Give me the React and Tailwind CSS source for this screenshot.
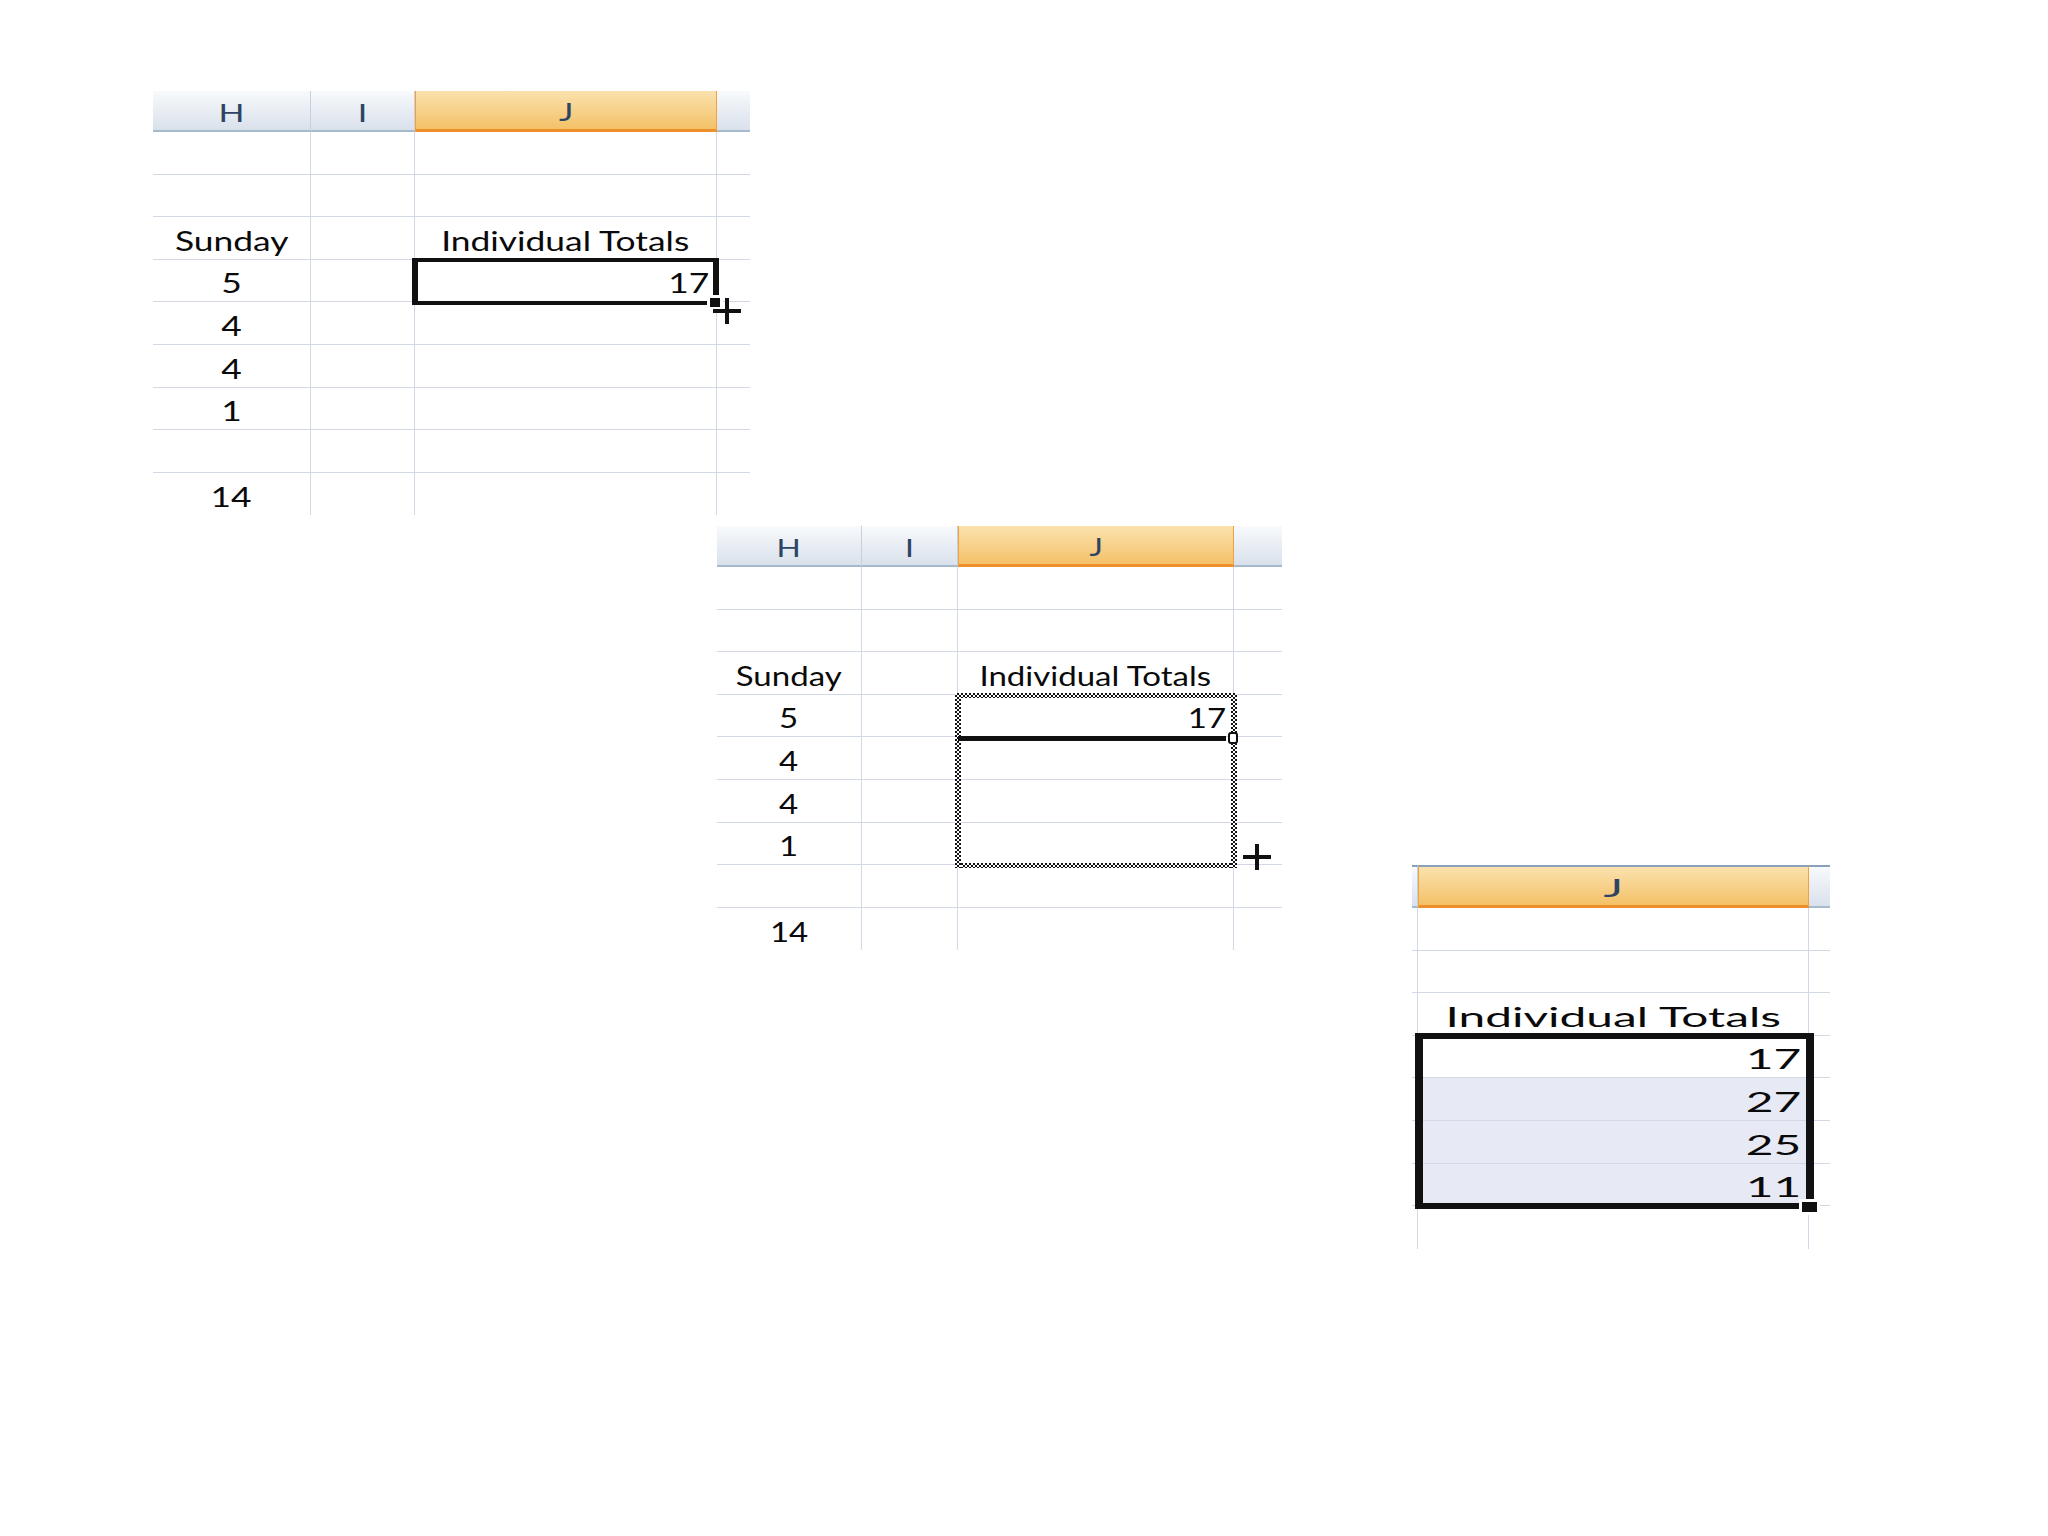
import React from "react";
import clsx from "clsx";

const GRID = "border-[#d3d8e7]";

function Plus({ className }) {
  return (
    <svg className={clsx("absolute", className)} width="28" height="26" viewBox="0 0 28 26">
      <rect x="0" y="11" width="28" height="4" fill="#111" />
      <rect x="12" y="0" width="4" height="26" fill="#111" />
    </svg>
  );
}

function HeaderCell({ col, kind, letter, isLast, scale, topBorder }) {
  const gray = kind === "g";
  return (
    <div
      className={clsx(
        "flex items-end justify-center pb-[5px] leading-none shrink-0 h-full text-[25px] text-[#2d4462]",
        col,
        gray
          ? "bg-linear-to-b from-[#f8fafc] to-[#d9e1eb] border-b-2 border-b-[#a6bace]"
          : "bg-linear-to-b from-[#fae2ad] to-[#f4c167] border-x border-x-[#f3a040] border-b-[3px] border-b-[#ee8f2c]",
        gray && !isLast && "border-r border-r-[#c6d1de]",
        topBorder && "border-t-2 border-t-[#8aa1bc]"
      )}
    >
      {letter ? <span className={clsx("inline-block", scale)}>{letter}</span> : null}
    </div>
  );
}

function Sheet({ cols, header, headerH, rows, scale, topBorder }) {
  return (
    <div className="flex flex-col">
      <div className={clsx("flex", headerH)}>
        {cols.map((c, i) => (
          <HeaderCell
            key={i}
            col={c}
            kind={header[i].k}
            letter={header[i].t}
            isLast={i === cols.length - 1}
            scale={scale}
            topBorder={topBorder}
          />
        ))}
      </div>
      {rows.map((row, r) => (
        <div key={r} className="flex h-[42.6px]">
          {cols.map((c, i) => {
            const cell = row[i];
            const right = cell && cell.a === "r";
            return (
              <div
                key={i}
                className={clsx(
                  "flex items-end pb-[5px] leading-none shrink-0 text-[26px] text-[#0a0a0a]",
                  c,
                  GRID,
                  i < cols.length - 1 && "border-r",
                  r < rows.length - 1 && "border-b",
                  right ? "justify-end pr-[7px]" : "justify-center",
                  cell && cell.f && "bg-[#e7e9f4]"
                )}
              >
                {cell && cell.t ? (
                  <span className={clsx("inline-block whitespace-nowrap", scale, right ? "origin-right" : "origin-center")}>
                    {cell.t}
                  </span>
                ) : null}
              </div>
            );
          })}
        </div>
      ))}
    </div>
  );
}

const HDR4 = [{ k: "g", t: "H" }, { k: "g", t: "I" }, { k: "o", t: "J" }, { k: "g" }];

const ROWS4 = [
  [],
  [],
  [{ t: "Sunday" }, null, { t: "Individual Totals" }],
  [{ t: "5" }, null, { t: "17", a: "r" }],
  [{ t: "4" }],
  [{ t: "4" }],
  [{ t: "1" }],
  [],
  [{ t: "14" }],
];

const ROWS3 = [
  [],
  [],
  [null, { t: "Individual Totals" }],
  [null, { t: "17", a: "r" }],
  [null, { t: "27", a: "r", f: true }],
  [null, { t: "25", a: "r", f: true }],
  [null, { t: "11", a: "r", f: true }],
  [],
];

function Ants({ className }) {
  return (
    <div
      className={clsx(
        "absolute bg-[repeating-conic-gradient(#111_0%_25%,#fff_0%_50%)] bg-[length:4px_4px]",
        className
      )}
    />
  );
}

export default function App() {
  return (
    <div className="w-[2048px] h-[1536px] bg-white overflow-hidden font-[Lato,'Noto_Sans',sans-serif] pt-[91px]">
      {/* Panel 1 */}
      <div className="relative ml-[153px] w-fit">
        <Sheet
          cols={["w-[158px]", "w-[104px]", "w-[302px]", "w-[33px]"]}
          header={HDR4}
          headerH="h-[41px]"
          rows={ROWS4}
          scale="scale-x-[1.36]"
        />
        <div className="absolute left-[259px] top-[167px] w-[307px] h-[47px] border-x-[6px] border-y-[4px] border-[#111]" />
        <div className="absolute left-[554px] top-[204px] w-[16px] h-[15px] border-[3px] border-white bg-[#111]" />
        <Plus className="left-[560px] top-[207px]" />
      </div>

      <div className="flex items-start mt-[10.6px] ml-[717px] gap-[130px]">
        {/* Panel 2 */}
        <div className="relative w-fit shrink-0">
          <Sheet
            cols={["w-[145px]", "w-[96px]", "w-[276px]", "w-[48px]"]}
            header={HDR4}
            headerH="h-[41px]"
            rows={ROWS4}
            scale="scale-x-[1.27]"
          />
          <Ants className="left-[238px] top-[167px] w-[282px] h-[5px]" />
          <Ants className="left-[238px] top-[337px] w-[282px] h-[5px]" />
          <Ants className="left-[238px] top-[167px] w-[6px] h-[175px]" />
          <Ants className="left-[514px] top-[167px] w-[6px] h-[175px]" />
          <div className="absolute left-[241px] top-[210px] w-[268px] h-[5px] bg-[#111]" />
          <div className="absolute left-[511px] top-[206px] w-[10px] h-[12px] border-2 border-[#111] bg-white rounded-[3px]" />
          <Plus className="left-[526px] top-[318px]" />
        </div>

        {/* Panel 3 */}
        <div className="relative w-fit shrink-0 mt-[339px]">
          <Sheet
            cols={["w-[6px]", "w-[391px]", "w-[21px]"]}
            header={[{ k: "g" }, { k: "o", t: "J" }, { k: "g" }]}
            headerH="h-[43px]"
            rows={ROWS3}
            scale="scale-x-[1.84]"
            topBorder
          />
          <div className="absolute left-[3px] top-[168px] w-[399px] h-[176px] border-x-[8px] border-y-[6px] border-[#111]" />
          <div className="absolute left-[387px] top-[334px] w-[21px] h-[16px] border-[3px] border-white bg-[#111]" />
        </div>
      </div>
    </div>
  );
}
